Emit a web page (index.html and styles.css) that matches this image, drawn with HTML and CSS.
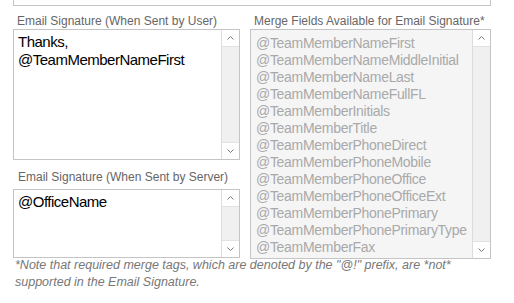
FILE: index.html
```html
<!DOCTYPE html>
<html lang="en">
<head>
    <meta charset="UTF-8">
    <title>Email Signature</title>
    <link rel="stylesheet" href="styles.css">
</head>
<body>
    <div class="panel">
        <div class="prev-box"></div>

        <div class="columns">
            <div class="col-left">
                <label class="field-label first">Email Signature (When Sent by User)</label>
                <div class="field field-user">
                    <textarea class="field-input">Thanks,
@TeamMemberNameFirst</textarea>
                    <div class="scrollbar">
                        <div class="sb-btn up">
                            <svg width="9" height="6" viewBox="0 0 9 6"><polyline points="1.5,4.5 4.5,1.5 7.5,4.5" fill="none" stroke="#777" stroke-width="1"/></svg>
                        </div>
                        <div class="sb-track"></div>
                        <div class="sb-btn down">
                            <svg width="9" height="6" viewBox="0 0 9 6"><polyline points="1.5,1.5 4.5,4.5 7.5,1.5" fill="none" stroke="#777" stroke-width="1"/></svg>
                        </div>
                    </div>
                </div>

                <label class="field-label second">Email Signature (When Sent by Server)</label>
                <div class="field field-server">
                    <textarea class="field-input">@OfficeName</textarea>
                    <div class="scrollbar">
                        <div class="sb-btn up">
                            <svg width="9" height="6" viewBox="0 0 9 6"><polyline points="1.5,4.5 4.5,1.5 7.5,4.5" fill="none" stroke="#777" stroke-width="1"/></svg>
                        </div>
                        <div class="sb-track"></div>
                        <div class="sb-btn down">
                            <svg width="9" height="6" viewBox="0 0 9 6"><polyline points="1.5,1.5 4.5,4.5 7.5,1.5" fill="none" stroke="#777" stroke-width="1"/></svg>
                        </div>
                    </div>
                </div>
            </div>

            <div class="col-right">
                <label class="field-label first">Merge Fields Available for Email Signature*</label>
                <div class="field field-merge">
                    <div class="merge-list" id="merge-list"></div>
                    <div class="scrollbar">
                        <div class="sb-btn up">
                            <svg width="9" height="6" viewBox="0 0 9 6"><polyline points="1.5,4.5 4.5,1.5 7.5,4.5" fill="none" stroke="#777" stroke-width="1"/></svg>
                        </div>
                        <div class="sb-track"></div>
                        <div class="sb-btn down">
                            <svg width="9" height="6" viewBox="0 0 9 6"><polyline points="1.5,1.5 4.5,4.5 7.5,1.5" fill="none" stroke="#777" stroke-width="1"/></svg>
                        </div>
                    </div>
                </div>
            </div>
        </div>

        <p class="note">*Note that required merge tags, which are denoted by the "@!" prefix, are *not* supported in the Email Signature.</p>
    </div>

    <script>
        // Merge fields shown in the read-only list
        const mergeFields = [
            'TeamMemberNameFirst',
            'TeamMemberNameMiddleInitial',
            'TeamMemberNameLast',
            'TeamMemberNameFullFL',
            'TeamMemberInitials',
            'TeamMemberTitle',
            'TeamMemberPhoneDirect',
            'TeamMemberPhoneMobile',
            'TeamMemberPhoneOffice',
            'TeamMemberPhoneOfficeExt',
            'TeamMemberPhonePrimary',
            'TeamMemberPhonePrimaryType',
            'TeamMemberFax'
        ];

        const list = document.getElementById('merge-list');
        mergeFields.forEach(name => {
            const item = document.createElement('div');
            item.className = 'merge-item';
            item.textContent = '@' + name;
            list.appendChild(item);
        });
    </script>
</body>
</html>
```

FILE: styles.css
```css
:root {
    --border-color: #c4c4c4;
    --label-color: #666;
    --muted-color: #a9a9a9;
}

body {
    font-family: 'Liberation Sans', Arial, sans-serif;
    margin: 0;
    padding: 0;
    background-color: #fff;
    color: #000;
}

.panel {
    width: 478px;
    padding-left: 13px;
}

.prev-box {
    height: 5px;
    border: 1px solid var(--border-color);
    border-top: none;
}

.columns {
    display: flex;
    gap: 10px;
}

.col-left {
    width: 227px;
    display: flex;
    flex-direction: column;
}

.col-right {
    width: 241px;
    display: flex;
    flex-direction: column;
}

.field-label {
    display: block;
    font-size: 12px;
    line-height: 15px;
    color: var(--label-color);
    padding-left: 4px;
}

.field-label.first {
    margin-top: 8px;
}

.field-label.second {
    margin-top: 10px;
    margin-bottom: 4px;
    padding-left: 5px;
}

.field {
    display: flex;
    border: 1px solid var(--border-color);
    box-sizing: border-box;
    background: #fff;
}

.field-user {
    height: 131px;
}

.field-server {
    height: 69px;
}

.field-merge {
    height: 230px;
    background: #f5f5f5;
}

.field-input {
    flex: 1;
    border: none;
    outline: none;
    resize: none;
    overflow: hidden;
    margin: 0;
    padding: 3px 4px;
    font-family: 'Liberation Sans', Arial, sans-serif;
    font-size: 15px;
    line-height: 18.3px;
    letter-spacing: -0.5px;
    color: #000;
    background: transparent;
}

.merge-list {
    flex: 1;
    overflow: hidden;
    padding: 5px 5px;
    font-size: 14px;
    line-height: 17px;
    letter-spacing: -0.3px;
    color: var(--muted-color);
    white-space: nowrap;
}

.scrollbar {
    width: 17px;
    display: flex;
    flex-direction: column;
    border-left: 1px solid #dcdcdc;
    background: #fff;
}

.sb-btn {
    height: 16px;
    display: flex;
    align-items: center;
    justify-content: center;
    background: #fff;
}

.sb-btn.up {
    border-bottom: 1px solid #e2e2e2;
}

.sb-btn.down {
    border-top: 1px solid #e2e2e2;
}

.sb-track {
    flex: 1;
    background: #f0f0f0;
}

.note {
    margin: -2px 0 0 2px;
    font-size: 12.5px;
    line-height: 17px;
    font-style: italic;
    color: #777;
}
```
